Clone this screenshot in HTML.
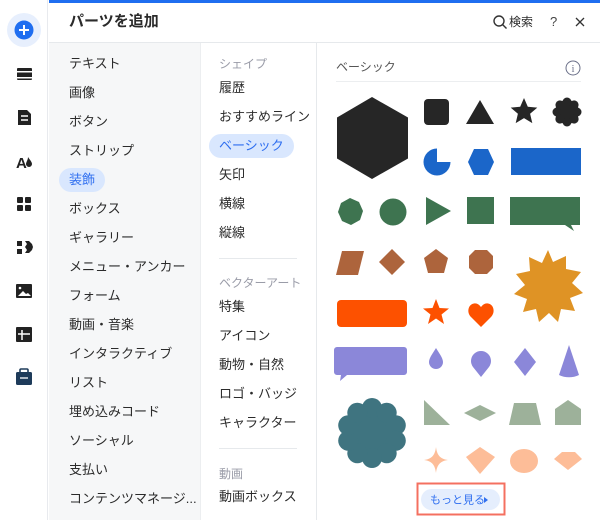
<!DOCTYPE html>
<html><head><meta charset="utf-8"><style>
*{margin:0;padding:0;box-sizing:border-box}
body{width:600px;height:520px;overflow:hidden;background:#fff;font-family:"Liberation Sans","Noto Sans CJK JP",sans-serif;color:#222;position:relative}
.a{position:absolute}
.side{left:0;top:0;width:48px;height:520px;background:#fff;border-right:1px solid #e8eaee}
.top{left:49px;top:0;width:551px;height:3px;background:#1f6ef0}
.hdr{left:49px;top:3px;width:551px;height:40px;border-bottom:1px solid #e6e9ec;background:#fff}
.col1{left:49px;top:43px;width:151px;height:477px;background:#f6f7f8}
.col2{left:200px;top:43px;width:117px;height:477px;background:#fff;border-right:1px solid #e6e9ec;border-left:1px solid #eceef0}
.t{position:absolute;font-size:13px;color:#2b2b2b;white-space:nowrap;line-height:16px}
.g{color:#9a9ca8;font-size:12px}
.sel{background:#d9e7fe;color:#2f6ff0;border-radius:14px;padding:4px 10px}
</style></head><body>
<div class="a side"></div>
<div class="a top"></div>
<div class="a hdr"></div>
<div class="a col1"></div>
<div class="a col2"></div>

<svg class="a" style="left:0;top:0" width="48" height="400">
<circle cx="24" cy="30" r="17" fill="#e7effd"/>
<circle cx="24" cy="30" r="9.5" fill="#1f6ef0"/>
<path d="M24 25v10M19 30h10" stroke="#fff" stroke-width="2"/>
<rect x="17" y="68" width="15" height="12" rx="1" fill="#222"/><rect x="17" y="71" width="15" height="1.5" fill="#fff"/><rect x="17" y="77" width="15" height="1.5" fill="#fff"/>
<path d="M18 110h9l4 4v11h-13z" fill="#222"/><path d="M21 116h7M21 120h7" stroke="#fff" stroke-width="1.5"/>
<text x="16" y="168" font-size="15" font-weight="bold" font-family="Liberation Sans" fill="#222">A</text><path d="M28 157c2 3 4 5 4 7a3 3 0 0 1-6 0c0-2 2-4 2-7z" fill="#222"/>
<rect x="17" y="197" width="6" height="6" rx="1" fill="#222"/><rect x="25" y="197" width="6" height="6" rx="1" fill="#222"/><rect x="17" y="205" width="6" height="6" rx="1" fill="#222"/><rect x="25" y="205" width="6" height="6" rx="1" fill="#222"/>
<rect x="17" y="241" width="5" height="5" fill="#222"/><rect x="17" y="249" width="5" height="5" fill="#222"/><path d="M25 241h4l3 3 1 3-1 3-3 3h-4l2-3-2-3 2-3z" fill="#222"/>
<rect x="16" y="284" width="16" height="14" rx="1" fill="#222"/><path d="M18 296l5-5 3 3 2-1 3 3z" fill="#fff"/><circle cx="20" cy="288" r="1.3" fill="#fff"/>
<rect x="16" y="327" width="16" height="15" rx="1" fill="#222"/><path d="M18 334h12M22 330v10" stroke="#fff" stroke-width="1.5"/>
<rect x="20" y="369" width="8" height="4" rx="1" fill="none" stroke="#1e3b5a" stroke-width="1.6"/><rect x="16" y="372" width="16" height="13" rx="1.5" fill="#1e3b5a"/><path d="M20 378h8" stroke="#fff" stroke-width="1.3"/>
</svg>

<div class="t" style="left:69px;top:14px;font-size:15px;font-weight:bold">パーツを追加</div>
<svg class="a" style="left:492px;top:14px" width="16" height="16"><circle cx="7" cy="7" r="5" fill="none" stroke="#333" stroke-width="1.4"/><path d="M10.5 10.5l4 4" stroke="#333" stroke-width="1.4"/></svg>
<div class="t" style="left:509px;top:14px;font-size:12px">検索</div>
<div class="t" style="left:550px;top:14px;font-size:13px;color:#444">?</div>
<svg class="a" style="left:575px;top:17px" width="10" height="10"><path d="M1 1l8 8M9 1l-8 8" stroke="#333" stroke-width="1.3"/></svg>

<div class="t" style="left:69px;top:56px">テキスト</div>
<div class="t" style="left:69px;top:85px">画像</div>
<div class="t" style="left:69px;top:114px">ボタン</div>
<div class="t" style="left:69px;top:143px">ストリップ</div>
<div class="t sel" style="left:59px;top:168px">装飾</div>
<div class="t" style="left:69px;top:201px">ボックス</div>
<div class="t" style="left:69px;top:230px">ギャラリー</div>
<div class="t" style="left:69px;top:259px">メニュー・アンカー</div>
<div class="t" style="left:69px;top:288px">フォーム</div>
<div class="t" style="left:69px;top:317px">動画・音楽</div>
<div class="t" style="left:69px;top:346px">インタラクティブ</div>
<div class="t" style="left:69px;top:375px">リスト</div>
<div class="t" style="left:69px;top:404px">埋め込みコード</div>
<div class="t" style="left:69px;top:433px">ソーシャル</div>
<div class="t" style="left:69px;top:462px">支払い</div>
<div class="t" style="left:69px;top:491px">コンテンツマネージ...</div>

<div class="t g" style="left:219px;top:56px">シェイプ</div>
<div class="t" style="left:219px;top:80px">履歴</div>
<div class="t" style="left:219px;top:109px">おすすめライン</div>
<div class="t sel" style="left:209px;top:134px">ベーシック</div>
<div class="t" style="left:219px;top:167px">矢印</div>
<div class="t" style="left:219px;top:196px">横線</div>
<div class="t" style="left:219px;top:225px">縦線</div>
<div class="a" style="left:219px;top:258px;width:78px;height:1px;background:#e6e9ec"></div>
<div class="t g" style="left:219px;top:275px">ベクターアート</div>
<div class="t" style="left:219px;top:299px">特集</div>
<div class="t" style="left:219px;top:328px">アイコン</div>
<div class="t" style="left:219px;top:357px">動物・自然</div>
<div class="t" style="left:219px;top:386px">ロゴ・バッジ</div>
<div class="t" style="left:219px;top:415px">キャラクター</div>
<div class="a" style="left:219px;top:448px;width:78px;height:1px;background:#e6e9ec"></div>
<div class="t g" style="left:219px;top:466px">動画</div>
<div class="t" style="left:219px;top:489px">動画ボックス</div>

<div class="t" style="left:336px;top:59px;font-size:12px;color:#555">ベーシック</div>
<div class="a" style="left:336px;top:81px;width:245px;height:1px;background:#eceef0"></div>
<svg class="a" style="left:565px;top:60px" width="16" height="16"><circle cx="8" cy="8" r="7" fill="none" stroke="#6a6f88" stroke-width="1"/><text x="8" y="12" font-size="10" text-anchor="middle" font-family="Liberation Serif" fill="#6a6f88">i</text></svg>

<svg class="a" style="left:0;top:0" width="600" height="520">
<g fill="#262626">
<path d="M372 97L408 117.5V158.5L372 179L337 158.5V117.5Z"/>
<rect x="424" y="99" width="25" height="26" rx="4"/>
<path d="M480 100L494 124H466Z"/>
<path d="M524 98l3.8 8.8 9.5 0.8-7.2 6.2 2.2 9.3-8.3-5-8.3 5 2.2-9.3-7.2-6.2 9.5-0.8z"/>
<circle cx="567" cy="112" r="12"/>
<g transform="translate(567 112)"><circle cx="0" cy="-10" r="4.5"/><circle cx="7.1" cy="-7.1" r="4.5"/><circle cx="10" cy="0" r="4.5"/><circle cx="7.1" cy="7.1" r="4.5"/><circle cx="0" cy="10" r="4.5"/><circle cx="-7.1" cy="7.1" r="4.5"/><circle cx="-10" cy="0" r="4.5"/><circle cx="-7.1" cy="-7.1" r="4.5"/></g>
</g>
<g fill="#1b66c9">
<path d="M437 162h13.5A13.5 13.5 0 1 1 437 148.5z"/>
<path d="M474 149h14l6 13-6 13h-14l-6-13z"/>
<rect x="511" y="148" width="70" height="27"/>
</g>
<g fill="#3e7450">
<path d="M350 198l9 4 4 9-3 9-9 5-9-4-4-9 3-9z"/>
<circle cx="393" cy="212" r="13.5"/>
<path d="M426 197L451 211L426 225Z"/>
<rect x="467" y="197" width="27" height="27"/>
<path d="M510 197h70v28h-9l3 6-9-6h-55z"/>
</g>
<g fill="#ad643c">
<path d="M342 251h22l-6 24h-22z"/>
<path d="M392 249l13 13-13 13-13-13z"/>
<path d="M436 249l12 9-4 15h-16l-4-15z"/>
<path d="M475 250h12l6 6v12l-6 6h-12l-6-6v-12z"/>
</g>
<path fill="#df9325" d="M548 250l5 12 13-6 0 13 15 3-9 11 11 10-13 5 5 13-14-2-3 13-9-9-10 9-3-13-13 3 4-13-13-5 11-9-9-11 14-3-1-14 13 6z"/>
<g fill="#fd5100">
<rect x="337" y="300" width="70" height="27" rx="4"/>
<path d="M436 299l3.5 9 9.5 0.5-7.5 6 2.5 9.5-8-5.5-8 5.5 2.5-9.5-7.5-6 9.5-0.5z"/>
<path d="M481 327l-10-10c-4.5-4.5-3-12.5 3-13.5 3-.5 5 1 7 3.5 2-2.5 4-4 7-3.5 6 1 7.5 9 3 13.5z"/>
</g>
<g fill="#8b87d9">
<path d="M340 347h64a3 3 0 0 1 3 3v22a3 3 0 0 1-3 3h-57l-7 6 1-6h-4a3 3 0 0 1-3-3v-22a3 3 0 0 1 3-3z"/>
<path d="M436 348c3 5 7 10 7 14a7 7 0 0 1-14 0c0-4 4-9 7-14z"/>
<path d="M481 377l-8-10a10 10 0 1 1 16 0z"/>
<path d="M525 348l11 14-11 14-11-14z"/>
<path d="M569 345l10 30c-6 3-14 3-20 0z"/>
</g>
<g fill="#3f7480">
<circle cx="372" cy="433" r="27"/>
<g transform="translate(372 433)">
<circle cx="0" cy="-25" r="10"/><circle cx="14.7" cy="-20.2" r="10"/><circle cx="23.8" cy="-7.7" r="10"/><circle cx="23.8" cy="7.7" r="10"/><circle cx="14.7" cy="20.2" r="10"/><circle cx="0" cy="25" r="10"/><circle cx="-14.7" cy="20.2" r="10"/><circle cx="-23.8" cy="7.7" r="10"/><circle cx="-23.8" cy="-7.7" r="10"/><circle cx="-14.7" cy="-20.2" r="10"/>
</g></g>
<g fill="#9db19a">
<path d="M424 400L450 425H424Z"/>
<path d="M480 405l16 8-16 8-16-8z"/>
<path d="M514 403h22l5 22h-32z"/>
<path d="M568 400l13 9v16h-26v-16z"/>
</g>
<g fill="#fdbd98">
<path d="M436 447c1 8 4 12 12 13-8 1-11 5-12 13-1-8-4-12-12-13 8-1 11-5 12-13z"/>
<path d="M480 447l15 10-15 17-14-17z"/>
<ellipse cx="524" cy="461" rx="14" ry="12"/>
<path d="M562 452h13l7 7-14 11-14-11z"/>
</g>
<rect x="417.5" y="483.5" width="87" height="31" fill="none" stroke="#f47060" stroke-width="2"/>
<rect x="421" y="489" width="79" height="21" rx="10.5" fill="#e5eefd"/>
<text x="430" y="503.5" font-size="11" fill="#2f6ff0" font-family="Liberation Sans,Noto Sans CJK JP,sans-serif">もっと見る</text>
<path d="M484 497l4 3-4 3z" fill="#2f6ff0"/>
</svg>
</body></html>
